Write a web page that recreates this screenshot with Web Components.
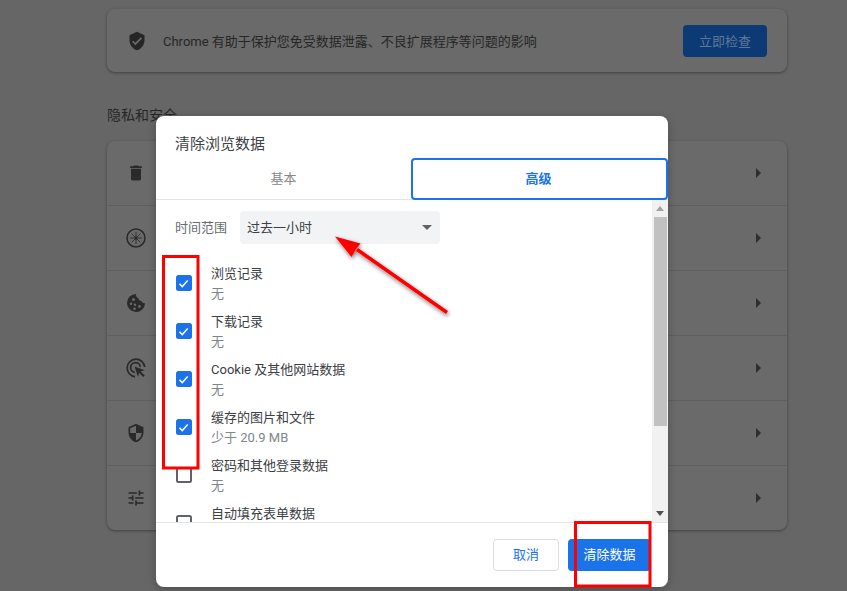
<!DOCTYPE html>
<html lang="zh">
<head>
<meta charset="utf-8">
<title>清除浏览数据</title>
<style>
html,body{margin:0;height:591px;overflow:hidden;background:#666}
body{font:13px Roboto,"Noto Sans CJK SC",sans-serif;color:#222}
</style>
</head>
<body>
<settings-page>
  <settings-card>
    <check-row>Chrome 有助于保护您免受数据泄露、不良扩展程序等问题的影响</check-row>
  </settings-card>
  <section-title>隐私和安全</section-title>
  <settings-card>
    <nav-row icon="trash"></nav-row>
    <nav-row icon="compass"></nav-row>
    <nav-row icon="cookie"></nav-row>
    <nav-row icon="target"></nav-row>
    <nav-row icon="shield"></nav-row>
    <nav-row icon="tune" last></nav-row>
  </settings-card>
</settings-page>
<clear-dialog>
  <span slot="title">清除浏览数据</span>
  <data-row checked label="浏览记录" sub="无"></data-row>
  <data-row checked label="下载记录" sub="无"></data-row>
  <data-row checked label="Cookie 及其他网站数据" sub="无"></data-row>
  <data-row checked label="缓存的图片和文件" sub="少于 20.9 MB"></data-row>
  <data-row label="密码和其他登录数据" sub="无"></data-row>
  <data-row label="自动填充表单数据" sub="无"></data-row>
</clear-dialog>
<mark-up></mark-up>
<script>
const ICONS={
 check:'<path d="M12 1L3 5v6c0 5.55 3.84 10.74 9 12 5.16-1.26 9-6.45 9-12V5l-9-4zm-2 16l-4-4 1.41-1.41L10 14.17l6.59-6.59L18 9l-8 8z"/>',
 trash:'<path d="M6 19c0 1.1.9 2 2 2h8c1.1 0 2-.9 2-2V7H6v12zM19 4h-3.5l-1-1h-5l-1 1H5v2h14V4z"/>',
 compass:'<circle cx="12" cy="12" r="10.800" fill="none" stroke="currentColor" stroke-width="1.800"/><path d="M12 4.500v15M4.500 12h15M6.700 6.700l10.600 10.600M17.300 6.700L6.700 17.300" stroke="currentColor" stroke-width="1"/><circle cx="12" cy="12" r="1.800"/>',
 cookie:'<g transform="translate(12 12) scale(1.200) translate(-12 -12)"><path fill-rule="evenodd" d="M12 3a9 9 0 1 0 9 9.200c-1.700.3-3-.6-3.400-2.200-1.700.2-3.300-1-3.300-2.900C12.800 6.900 11.800 5 12 3zM9.500 7a1.500 1.500 0 1 1 0 3 1.500 1.500 0 0 1 0-3zm-2.500 4.500a1.300 1.300 0 1 1 0 2.600 1.300 1.300 0 0 1 0-2.600zM11 12.500a1.200 1.200 0 1 1 0 2.400 1.200 1.200 0 0 1 0-2.400zm4.500 1.500a1.400 1.400 0 1 1 0 2.800 1.400 1.400 0 0 1 0-2.800zM10.500 16.500a1.300 1.300 0 1 1 0 2.600 1.300 1.300 0 0 1 0-2.600z"/></g>',
 target:'<g transform="translate(12 12) scale(1.170) translate(-12 -12)"><path fill="none" stroke="currentColor" stroke-width="1.800" d="M11 20.900A9 9 0 1 1 20.900 11"/><path fill="none" stroke="currentColor" stroke-width="1.800" d="M10.800 16.400A5 5 0 1 1 16.400 10.800"/><path d="M10.500 10.500l10.500 3.700-4.300 1.300 4.300 4.300-1.500 1.500-4.300-4.300-1.200 4.300z"/></g>',
 shield:'<path d="M12 1L3 5v6c0 5.55 3.84 10.74 9 12 5.16-1.26 9-6.45 9-12V5l-9-4zm0 10.990h7c-.53 4.120-3.280 7.790-7 8.940V12H5V6.300l7-3.110v8.800z"/>',
 tune:'<path d="M3 17v2h6v-2H3zM3 5v2h10V5H3zm10 16v-2h8v-2h-8v-2h-2v6h2zM7 9v2H3v2h4v2h2V9H7zm14 4v-2H11v2h10zm-6-4h2V7h4V5h-4V3h-2v6z"/>'
};
const svg=(n,s=20)=>`<svg width="${s}" height="${s}" viewBox="0 0 24 24" fill="currentColor" aria-hidden="true">${ICONS[n]}</svg>`;
function el(name,render){
  customElements.define(name,class extends HTMLElement{
    connectedCallback(){
      if(!this.shadowRoot) this.attachShadow({mode:'open'}).innerHTML=render(this);
    }
  });
}
el('settings-page',()=>`<style>
:host{display:flex;flex-direction:column;box-sizing:border-box;height:591px;padding:9px 60px 0 107px;background:#666}
</style><slot></slot>`);
el('settings-card',()=>`<style>
:host{display:block;width:680px;background:#6a6a6a;border-radius:8px;box-shadow:0 1px 3px rgba(0,0,0,.38)}
</style><slot></slot>`);
el('section-title',()=>`<style>
:host{display:block;height:21px;margin:33px 0 15px;font-size:14px;line-height:21px;color:#262626}
</style><slot></slot>`);
el('check-row',()=>`<style>
:host{display:flex;align-items:center;height:63px;box-sizing:border-box;padding:0 20px 0 20px;color:#262626}
svg{flex:none;margin-right:16px}
span{flex:1;font-size:13px;white-space:nowrap}
b{flex:none;width:84px;height:32px;border-radius:4px;background:#0b3a75;color:#5f7898;font-weight:400;font-size:13px;display:flex;align-items:center;justify-content:center}
</style>${svg('check')}<span><slot></slot></span><b>立即检查</b>`);
el('nav-row',h=>`<style>
:host{display:flex;align-items:center;justify-content:space-between;box-sizing:border-box;height:${h.hasAttribute('last')?64:65}px;padding:0 26px 0 19px;color:#2a2a2a;${h.hasAttribute('last')?'':'border-bottom:1px solid #5f5f5f;'}}
i{width:0;height:0;border-left:5px solid #2e2e2e;border-top:5px solid transparent;border-bottom:5px solid transparent}
</style>${svg(h.getAttribute('icon'))}<i></i>`);
el('clear-dialog',()=>`<style>
:host{position:absolute;left:156px;top:116px;width:512px;height:471px;display:flex;flex-direction:column;background:#fff;border-radius:8px;overflow:hidden;box-shadow:0 2px 8px rgba(0,0,0,.25);color:#3c4043}
h2{margin:0;height:42px;box-sizing:border-box;padding:18px 0 0 19px;font-weight:400;font-size:15px;line-height:20px;color:#3f4246}
nav{display:flex;height:42px;box-sizing:border-box;border-bottom:1px solid #e4e4e4;flex:none}
nav span{flex:0 0 255px;display:flex;align-items:center;justify-content:center;color:#888;padding-bottom:2px;box-sizing:border-box}
nav strong{flex:1;box-sizing:border-box;margin-bottom:-1px;padding:0 2px 3px 0;border:2px solid #1a73e8;border-radius:4px;display:flex;align-items:center;justify-content:center;color:#1a73e8;font-weight:700}
main{flex:1;display:flex;min-height:0}
.list{flex:1;min-width:0;overflow:hidden;padding:11px 0 0 19px}
.time{display:flex;align-items:center;height:33px;margin-bottom:20px;color:#686c70}
.time em{font-style:normal;width:65px;padding-bottom:2px}
.sel{width:200px;height:33px;box-sizing:border-box;padding:0 8px 2px 7px;background:#f1f3f4;border-radius:4px;display:flex;align-items:center;justify-content:space-between;color:#3c4043}
.sel i{border-top:5px solid #5f6368;border-left:5px solid transparent;border-right:5px solid transparent;margin-top:2px}
.bar{flex:none;width:16px;background:#f1f1f1;display:flex;flex-direction:column;align-items:center;justify-content:space-between;position:relative}
.bar u{position:absolute;left:2px;top:17px;width:12.500px;height:209px;background:#c1c1c1}
.up,.dn{width:0;height:0;border-left:4px solid transparent;border-right:4px solid transparent}
.up{margin-top:6px;border-bottom:5px solid #a3a3a3}
.dn{margin-bottom:6px;border-top:5px solid #505050}
footer{flex:none;height:65px;box-sizing:border-box;border-top:1px solid #e4e4e4;padding:16px 17px 0 0;display:flex;justify-content:flex-end;align-items:flex-start;gap:9px}
button{font:inherit;font-size:13px;border-radius:4px;height:32px;padding:0 0 3px;box-sizing:border-box}
.c{width:66px;background:#fff;border:1px solid #dadce0;color:#1a73e8}
.o{width:83px;background:#1a73e8;border:0;color:#fff}
</style>
<h2><slot name="title"></slot></h2>
<nav><span>基本</span><strong>高级</strong></nav>
<main>
<div class="list">
<div class="time"><em>时间范围</em><div class="sel">过去一小时<i></i></div></div>
<slot></slot>
</div>
<div class="bar"><b class="up"></b><u></u><b class="dn"></b></div>
</main>
<footer><button class="c">取消</button><button class="o">清除数据</button></footer>`);
el('data-row',h=>`<style>
:host{display:flex;height:48px;flex:none}
.box{flex:none;width:16px;height:16px;box-sizing:border-box;border-radius:2.500px;margin:11px 19px 0 0;display:flex;align-items:center;justify-content:center;
 ${h.hasAttribute('checked')?'background:#1a73e8;':'border:2px solid #5f6368;'}}
.box{margin-left:.5px;margin-right:19.500px}
.t{font-size:13px;line-height:20px;color:#3c4043;white-space:nowrap}
.s{font-size:13px;line-height:20px;color:#80868b;white-space:nowrap}
</style><div class="box">${h.hasAttribute('checked')?'<svg width="13" height="13" viewBox="0 0 13 13"><path d="M2.500 6.800l2.800 2.800 5.400-6" fill="none" stroke="#fff" stroke-width="1.500"/></svg>':''}</div>
<div><div class="t">${h.getAttribute('label')}</div><div class="s">${h.getAttribute('sub')}</div></div>`);
el('mark-up',()=>`<style>
:host{position:absolute;left:0;top:0;width:847px;height:591px;pointer-events:none}
svg{display:block}
</style><svg width="847" height="591" viewBox="0 0 847 591" fill="none">
<defs><filter id="s" x="-20%" y="-20%" width="140%" height="140%"><feDropShadow dx="1" dy="2" stdDeviation="2" flood-color="#000" flood-opacity=".55"/></filter></defs>
<rect x="163.500" y="256.500" width="34.500" height="211.500" stroke="#f00" stroke-width="3"/>
<rect x="575.500" y="522.500" width="74.500" height="63.500" stroke="#f00" stroke-width="3"/>
<g filter="url(#s)"><path d="M447 312.500L357 249.500" stroke="#f00" stroke-width="3.500"/><path d="M335 236.500L360.500 243.500 356 249 351.500 257z" fill="#f00"/></g>
</svg>`);
</script>
</body>
</html>
